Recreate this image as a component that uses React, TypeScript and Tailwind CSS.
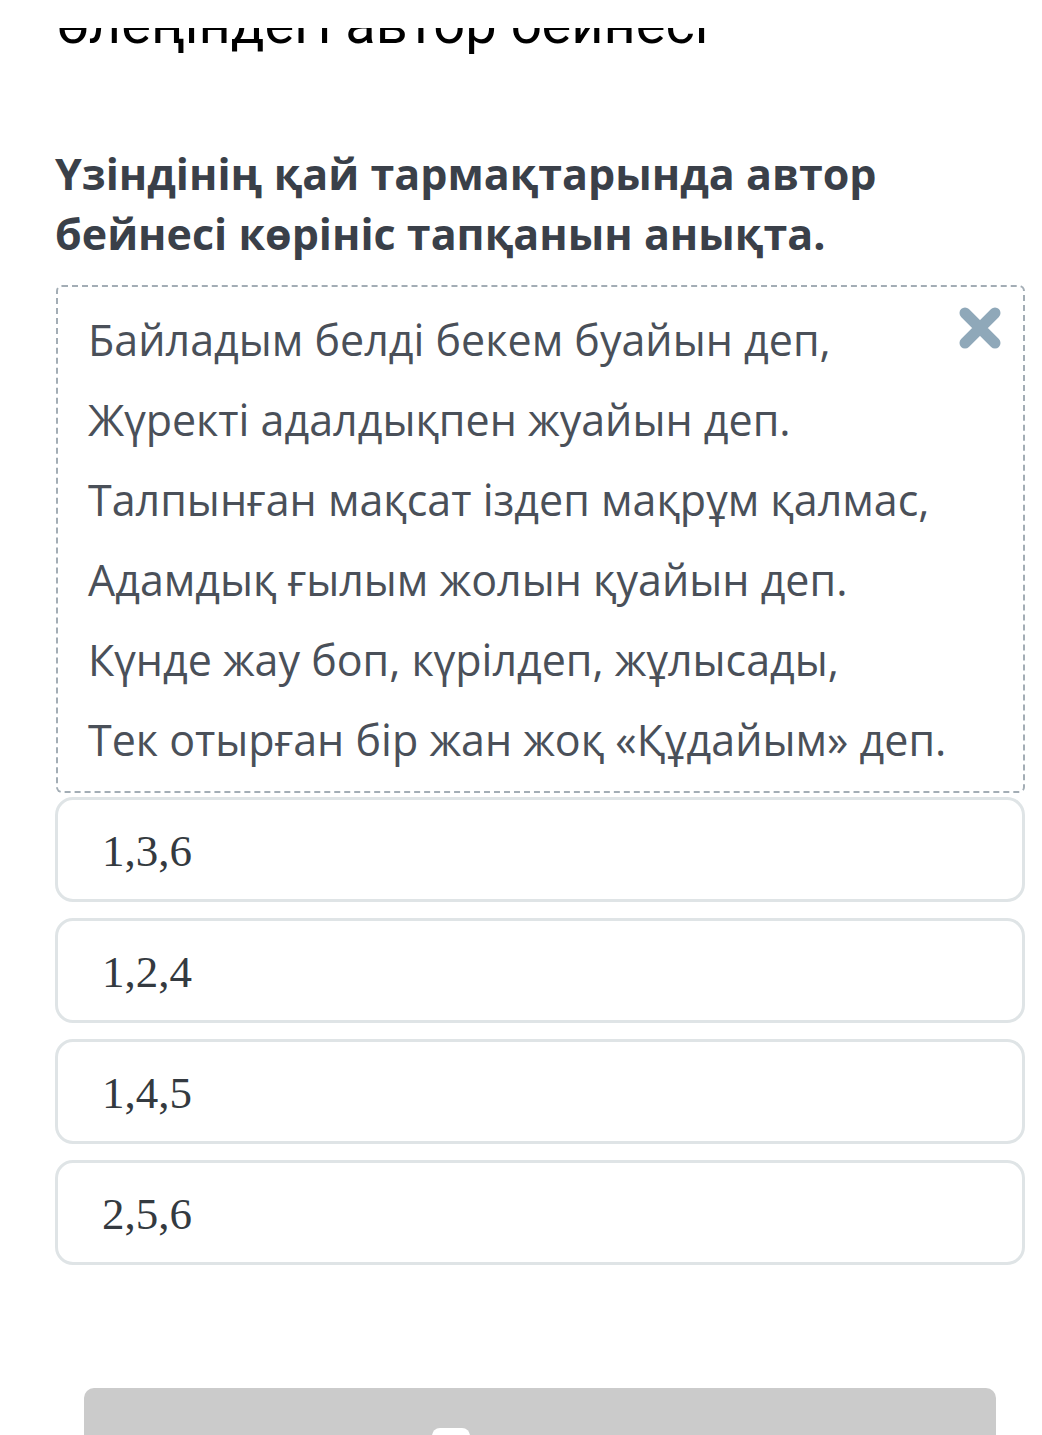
const poem = [
  "Байладым белді бекем буайын деп,",
  "Жүректі адалдықпен жуайын деп.",
  "Талпынған мақсат іздеп мақрұм қалмас,",
  "Адамдық ғылым жолын қуайын деп.",
  "Күнде жау боп, күрілдеп, жұлысады,",
  "Тек отырған бір жан жоқ «Құдайым» деп.",
];

const options = ["1,3,6", "1,2,4", "1,4,5", "2,5,6"];

export default function App() {
  return (
    <div className="w-[1042px] h-[1435px] overflow-hidden bg-white font-['Open_Sans',sans-serif]">
      {/* page header covers the top of the previous title */}
      <div className="h-[28px] bg-white" />
      <div className="h-[30px] overflow-hidden pl-[57px]">
        <h1 className="-mt-[34px] text-[56px] leading-[60px] text-black font-['Roboto',sans-serif] whitespace-nowrap">
          өлеңіндегі автор бейнесі
        </h1>
      </div>

      <div className="pl-[55px] pr-[17px]">
        <h2 className="mt-[86px] text-[43px] leading-[60px] font-bold text-[#3a4049]">
          Үзіндінің қай тармақтарында автор
          <br />
          бейнесі көрініс тапқанын анықта.
        </h2>

        <div className="relative mt-[21px] ml-px rounded-[6px] border-2 border-dashed border-[#a3adb5] pl-[30px] pt-[13px] pb-[11px]">
          <button className="absolute right-[20px] top-[18px] text-[#8fa8b9]">
            <svg width="46" height="46" viewBox="0 0 46 46">
              <path d="M8 8 L38 38 M38 8 L8 38" stroke="currentColor" strokeWidth="11" strokeLinecap="round" />
            </svg>
          </button>
          {poem.map((line, i) => (
            <p key={i} className="text-[43px] leading-[80px] text-[#4a5059] whitespace-nowrap">
              {line}
            </p>
          ))}
        </div>

        <div className="mt-[4px] flex flex-col gap-[16px]">
          {options.map((opt) => (
            <div
              key={opt}
              className="h-[105px] rounded-[18px] border-[3px] border-[#dfe4e6] flex items-center pl-[44px]"
            >
              <span className="pt-[4px] font-['Liberation_Serif',serif] text-[45px] text-[#343a40]">{opt}</span>
            </div>
          ))}
        </div>
      </div>

      <div className="mt-[123px] ml-[84px] mr-[46px] h-[120px] rounded-[10px] bg-[#cbcbcb] flex pl-[348px] pt-[40px]">
        <div className="w-[38px] h-[30px] rounded-t-[8px] bg-white" />
      </div>
    </div>
  );
}
